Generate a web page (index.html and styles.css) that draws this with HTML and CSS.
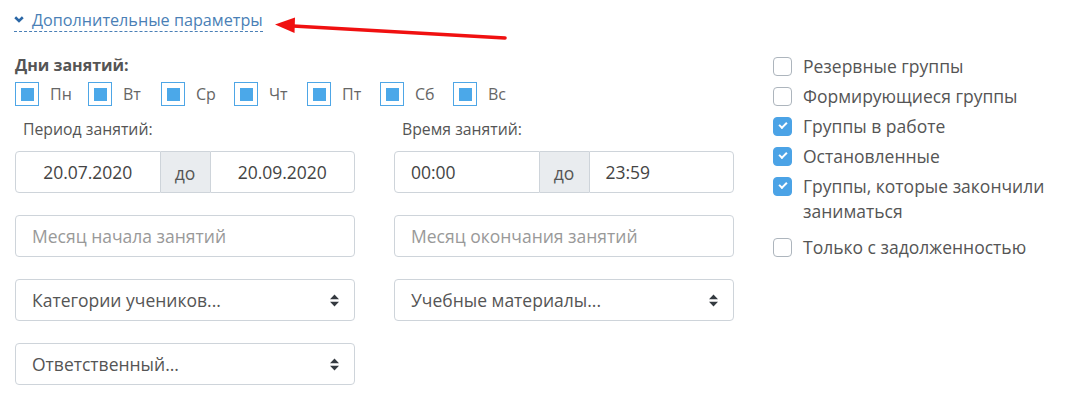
FILE: index.html
```html
<!DOCTYPE html>
<html lang="ru">
<head>
    <meta charset="UTF-8">
    <title>Фильтр групп</title>
    <link rel="stylesheet" href="styles.css">
</head>
<body>
    <div class="filters">
        <a href="#" class="toggle">
            <svg class="chevron" width="10" height="7" viewBox="0 0 10 7"><path d="M1.2 1.3L5 5l3.8-3.7" fill="none" stroke="currentColor" stroke-width="2.6"/></svg>
            <span>Дополнительные параметры</span>
        </a>

        <!-- annotation arrow pointing at the toggle -->
        <svg class="pointer" width="240" height="30" viewBox="0 0 240 30">
            <path d="M18 11L230 23" stroke="#f01010" stroke-width="3.6" stroke-linecap="round"/>
            <path d="M0 9.5L20 2.5L19.5 18Z" fill="#f01010"/>
        </svg>

        <div class="filters-body">
            <div class="days">
                <div class="days-title">Дни занятий:</div>
                <div class="days-list">
                    <label class="day"><span class="day-box"></span>Пн</label>
                    <label class="day"><span class="day-box"></span>Вт</label>
                    <label class="day"><span class="day-box"></span>Ср</label>
                    <label class="day"><span class="day-box"></span>Чт</label>
                    <label class="day"><span class="day-box"></span>Пт</label>
                    <label class="day"><span class="day-box"></span>Сб</label>
                    <label class="day"><span class="day-box"></span>Вс</label>
                </div>
            </div>

            <div class="field-col">
                <div class="field-label">Период занятий:</div>
                <div class="input-group">
                    <div class="input center">20.07.2020</div>
                    <div class="addon">до</div>
                    <div class="input center">20.09.2020</div>
                </div>
                <div class="input placeholder">Месяц начала занятий</div>
                <div class="select">Категории учеников...
                    <svg class="caret" width="9" height="13" viewBox="0 0 9 13"><path d="M0 5.2L4.5 0.5L9 5.2ZM0 7.8L4.5 12.5L9 7.8Z" fill="#343a40"/></svg>
                </div>
                <div class="select">Ответственный...
                    <svg class="caret" width="9" height="13" viewBox="0 0 9 13"><path d="M0 5.2L4.5 0.5L9 5.2ZM0 7.8L4.5 12.5L9 7.8Z" fill="#343a40"/></svg>
                </div>
            </div>

            <div class="field-col">
                <div class="field-label">Время занятий:</div>
                <div class="input-group">
                    <div class="input">00:00</div>
                    <div class="addon">до</div>
                    <div class="input">23:59</div>
                </div>
                <div class="input placeholder">Месяц окончания занятий</div>
                <div class="select">Учебные материалы...
                    <svg class="caret" width="9" height="13" viewBox="0 0 9 13"><path d="M0 5.2L4.5 0.5L9 5.2ZM0 7.8L4.5 12.5L9 7.8Z" fill="#343a40"/></svg>
                </div>
            </div>

            <div class="status-col">
                <div class="status-group">
                    <label class="check"><span class="check-box"></span>Резервные группы</label>
                    <label class="check"><span class="check-box"></span>Формирующиеся группы</label>
                    <label class="check"><span class="check-box checked"></span>Группы в работе</label>
                    <label class="check"><span class="check-box checked"></span>Остановленные</label>
                    <label class="check"><span class="check-box checked"></span>Группы, которые закончили заниматься</label>
                </div>
                <div class="status-group debt">
                    <label class="check"><span class="check-box"></span>Только с задолженностью</label>
                </div>
            </div>
        </div>
    </div>
</body>
</html>
```

FILE: styles.css
```css
body {
    margin: 0;
    font-family: "Open Sans", "Liberation Sans", sans-serif;
    color: #555;
    background: #fff;
}
.filters {
    position: relative;
    padding: 10px 15px 0;
}
.toggle {
    display: flex;
    width: fit-content;
    align-items: center;
    gap: 8px;
    margin-left: -1px;
    font-size: 16.2px;
    line-height: 21px;
    color: #4a7fb6;
    text-decoration: none;
    border-bottom: 1px dashed #4a7fb6;
}
.chevron { color: #2b67a6; margin-top: -2px; }
.pointer {
    position: absolute;
    left: 275px;
    top: 15px;
}
.filters-body {
    display: grid;
    grid-template-columns: 340px 340px 300px;
    column-gap: 39px;
    margin-top: 22px;
}
.days { grid-column: 1 / 3; }
.days-title {
    font-weight: bold;
    font-size: 16px;
    line-height: 22px;
    color: #555;
}
.days-list {
    display: flex;
    margin-top: 6px;
}
.day {
    display: flex;
    align-items: center;
    gap: 11px;
    width: 73px;
    font-size: 16px;
    color: #666;
}
.day-box {
    width: 22px;
    height: 22px;
    border: 1px solid #4ea6e6;
    display: flex;
    align-items: center;
    justify-content: center;
}
.day-box::after {
    content: "";
    width: 13px;
    height: 13px;
    background: #4ba8e9;
}
.field-col {
    display: flex;
    flex-direction: column;
    gap: 22px;
    padding-top: 11px;
}
.field-label {
    font-size: 15.8px;
    line-height: 24px;
    padding-left: 8px;
    margin-bottom: -12px;
}
.input-group {
    display: flex;
    height: 42px;
}
.input, .select {
    box-sizing: border-box;
    height: 42px;
    border: 1px solid #ced4da;
    border-radius: 4px;
    padding: 0 16px;
    display: flex;
    align-items: center;
    font-size: 17.5px;
    color: #444;
}
.input-group .input {
    flex: 1;
}
.input-group .input:first-child { border-radius: 4px 0 0 4px; }
.input-group .input:last-child { border-radius: 0 4px 4px 0; }
.input.center { justify-content: center; }
.addon {
    width: 49px;
    flex: none;
    box-sizing: border-box;
    background: #e9ecef;
    border-top: 1px solid #ced4da;
    border-bottom: 1px solid #ced4da;
    display: flex;
    align-items: center;
    justify-content: center;
    font-size: 17.5px;
    color: #555;
    padding-top: 2px;
}
.placeholder { color: #999; }
.select {
    justify-content: space-between;
    color: #555;
}
.caret { margin-right: -1px; }
.status-col {
    grid-column: 3;
    grid-row: 1 / 3;
}
.status-group {
    display: flex;
    flex-direction: column;
    gap: 5px;
}
.status-group.debt { margin-top: 11px; }
.check {
    display: flex;
    align-items: flex-start;
    gap: 11px;
    font-size: 17.5px;
    line-height: 25px;
    color: #555;
}
.check-box {
    flex: none;
    box-sizing: border-box;
    width: 19px;
    height: 19px;
    margin-top: 3px;
    border: 1px solid #adb5bd;
    border-radius: 4px;
    background: #fff;
    position: relative;
}
.check-box.checked {
    background: #4ba3e6;
    border-color: #4ba3e6;
}
.check-box.checked::after {
    content: "";
    position: absolute;
    left: 5px;
    top: 4px;
    width: 6px;
    height: 3px;
    border-left: 2px solid #fff;
    border-bottom: 2px solid #fff;
    transform: rotate(-45deg);
}
```
